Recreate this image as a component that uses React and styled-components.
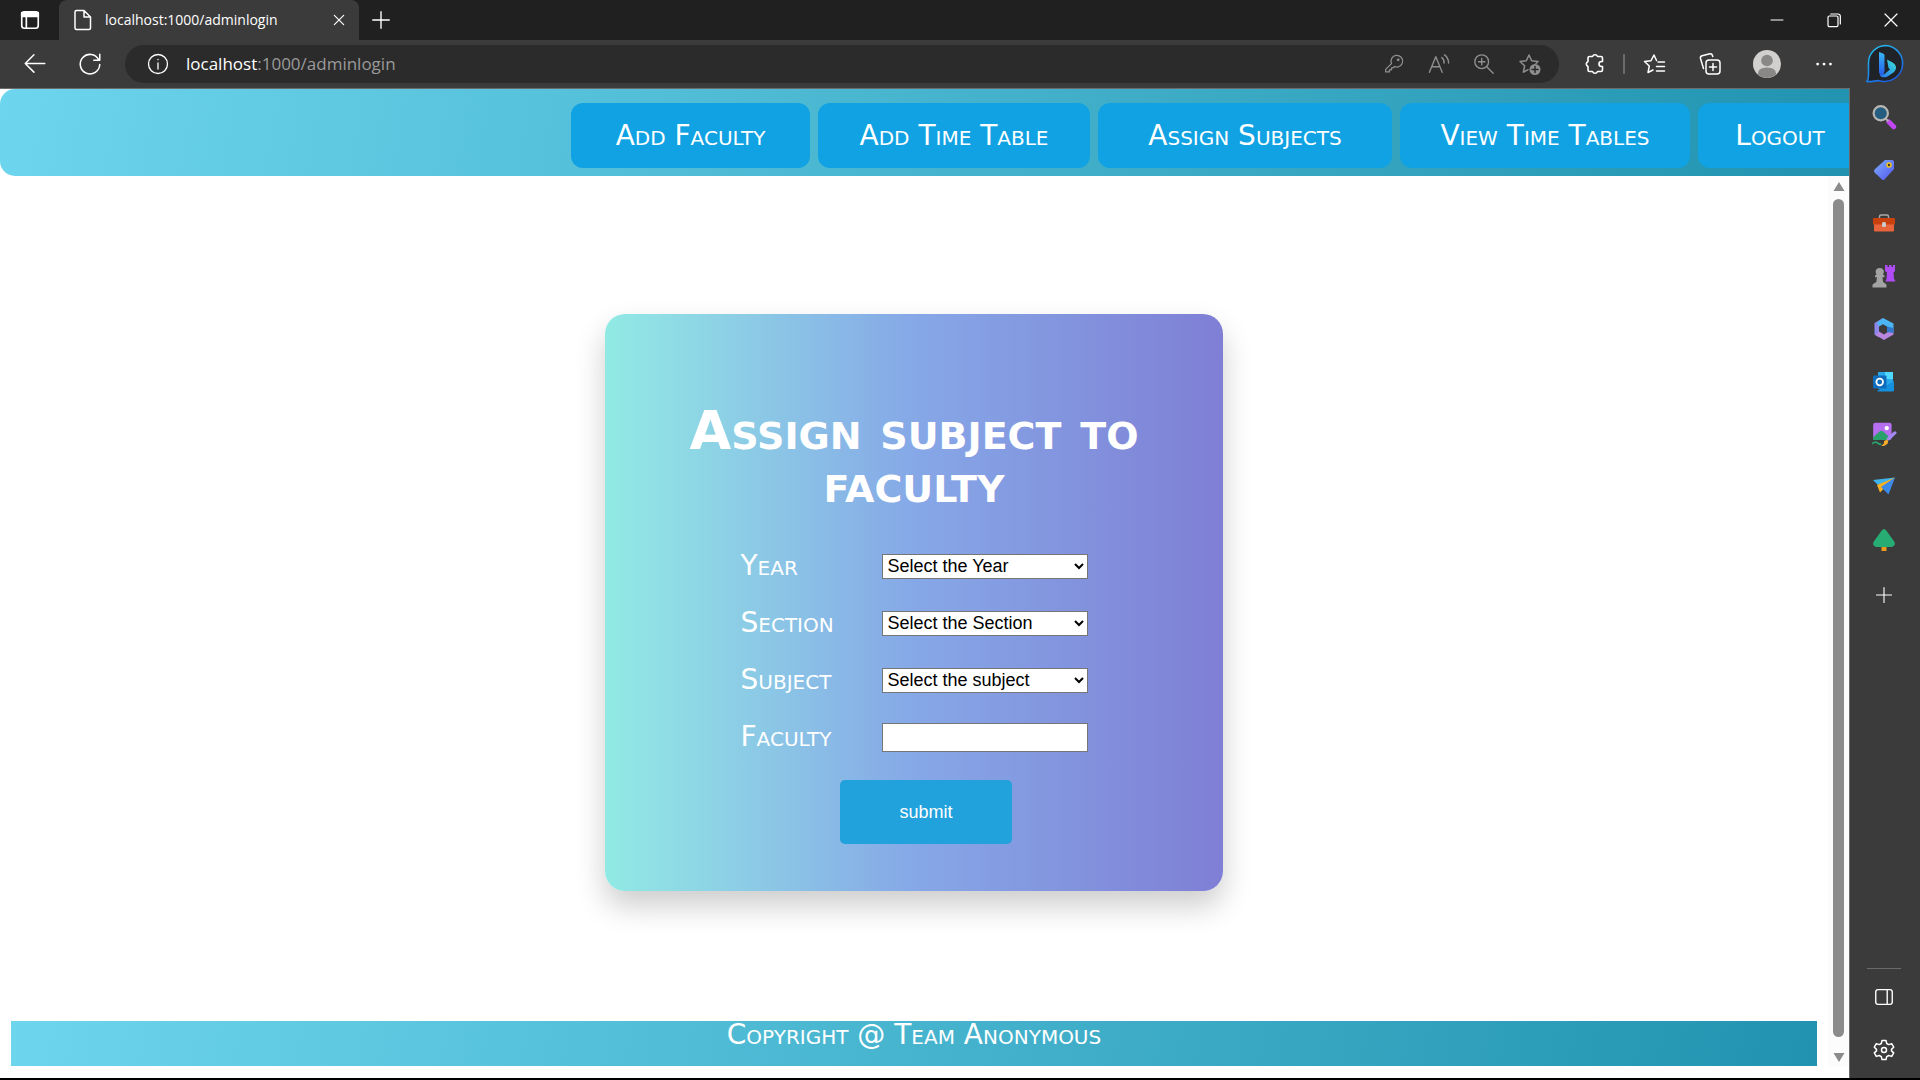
import React from "react";
import styled, { createGlobalStyle } from "styled-components";

const Global = createGlobalStyle`
  * { box-sizing: border-box; }
  html, body, #root { height: 100%; margin: 0; }
  body { background: #000; overflow: hidden; }
  button { border: 0; padding: 0; background: none; color: inherit; font: inherit; }
  svg { display: block; }
`;

const ui = `"Open Sans", "Noto Sans", sans-serif`;
const display = `"DejaVu Sans", sans-serif`;

const Browser = styled.div`
  height: calc(100vh - 2px);
  display: flex;
  flex-direction: column;
  background: #3b3b3b;
  color: #fff;
  font-family: ${ui};
`;
const TabStrip = styled.div`
  flex: none;
  height: 40px;
  display: flex;
  align-items: center;
  background: #202020;
`;
const IconButton = styled.button`
  flex: none;
  width: ${(p) => p.$w}px;
  height: ${(p) => p.$h || 40}px;
  display: flex;
  align-items: center;
  justify-content: center;
`;
const Tab = styled.div`
  width: 300px;
  height: 40px;
  padding: 0 8px 0 12px;
  display: flex;
  align-items: center;
  gap: 10px;
  background: #3b3b3b;
  border-radius: 8px 8px 0 0;
  font-size: 14px;
  line-height: 20px;
`;
const TabTitle = styled.span`
  flex: 1;
`;
const Spacer = styled.div`
  flex: 1;
`;
const Toolbar = styled.div`
  flex: none;
  height: 48px;
  display: flex;
  align-items: center;
  padding-left: 7px;
`;
const AddressBar = styled.div`
  flex: 1;
  height: 38px;
  margin: 0 8px;
  padding: 0 8px 0 12px;
  display: flex;
  align-items: center;
  background: #2b2b2b;
  border-radius: 19px;
`;
const Address = styled.input`
  width: 10px;
  flex: 1;
  padding: 0;
  border: 0;
  outline: 0;
  background: none;
  color: #9a9a9a;
  font: 17px/24px ${ui};
`;
const Host = styled.label`
  padding-left: 8px;
  font-size: 17px;
  line-height: 24px;
`;
const Divider = styled.div`
  flex: none;
  width: ${(p) => (p.$h ? "34px" : "2px")};
  height: ${(p) => (p.$h ? "1px" : "20px")};
  background: #6b6b6b;
`;
const Body = styled.div`
  flex: 1;
  min-height: 0;
  display: flex;
`;
const Page = styled.div`
  flex: 1;
  min-width: 0;
  display: flex;
  flex-direction: column;
  background: #fff;
  border-top: 1px solid #6b6b6b;
  border-right: 1px solid #6b6b6b;
`;
const SideBar = styled.aside`
  flex: none;
  width: 70px;
  padding: 2px 2px 3px 0;
  display: flex;
  flex-direction: column;
  align-items: center;
`;

const Header = styled.header`
  flex: none;
  height: 87px;
  padding: 14px 0 8px;
  display: flex;
  justify-content: flex-end;
  overflow: hidden;
  border-radius: 15px 0 0 15px;
  background: linear-gradient(100deg, #6dd5ed, #2193b0);
`;
const Nav = styled.nav`
  display: flex;
  gap: 8px;
  margin-right: -13px;
`;
const NavLink = styled.a`
  min-width: ${(p) => p.$w}px;
  height: 65px;
  display: flex;
  align-items: center;
  justify-content: center;
  border-radius: 12px;
  background: #10a2e2;
  color: #fff;
  font: 28px/32px ${display};
  font-variant: small-caps;
  text-decoration: none;
  white-space: nowrap;
`;
const Scroller = styled.div`
  flex: 1;
  min-height: 0;
  display: flex;
  padding-bottom: 11px;
`;
const Content = styled.main`
  flex: 1;
  display: flex;
  flex-direction: column;
  justify-content: space-between;
  padding: 138px 11px 1px;
`;
const Track = styled.div`
  width: 21px;
  padding: 6px 0 5px;
  display: flex;
  flex-direction: column;
  align-items: center;
  background: #fcfcfc;
`;
const Thumb = styled.div`
  flex: 1;
  width: 11px;
  margin: 8px 0 16px;
  border-radius: 6px;
  background: #8b8b8b;
`;
const Card = styled.form`
  align-self: center;
  width: 618px;
  min-height: 577px;
  padding: 90px 40px 46px;
  border-radius: 20px;
  background: linear-gradient(90deg, #91eae4, #86a8e7, #7f7fd5);
  box-shadow: 0 15px 30px rgba(0, 0, 0, 0.2);
`;
const Title = styled.h1`
  margin: 0 0 42px;
  font: bold 54px/53px ${display};
  font-variant: small-caps;
  text-align: center;
`;
const Row = styled.div`
  height: 28px;
  margin-bottom: 29px;
  display: flex;
  align-items: center;
  justify-content: center;
`;
const Label = styled.label`
  width: 141px;
  font: 28px/28px ${display};
  font-variant: small-caps;
`;
const Select = styled.select`
  width: 206px;
  height: 25px;
  padding: 0 1px;
  border: 1px solid #767676;
  background: #fff;
  color: #000;
  font: 18px/20px "Liberation Sans", sans-serif;
`;
const Input = styled.input`
  width: 206px;
  height: 29px;
  border: 1px solid #767676;
  background: #fff;
  font: 18px/20px "Liberation Sans", sans-serif;
`;
const Submit = styled.button`
  display: block;
  width: 172px;
  height: 64px;
  margin-left: 195px;
  border-radius: 5px;
  background: #21a2dc;
  color: #fff;
  font: 18px/24px "Liberation Sans", sans-serif;
`;
const Footer = styled.footer`
  height: 45px;
  background: linear-gradient(100deg, #6dd5ed, #2193b0);
  text-align: center;
  font: 28px/28px ${display};
  font-variant: small-caps;
`;

const Line = ({ s = 24, c = "#fff", w = 1.5, children }) => (
  <svg width={s} height={s} viewBox="0 0 24 24" fill="none" stroke={c} strokeWidth={w} strokeLinecap="round" strokeLinejoin="round" aria-hidden="true">
    {children}
  </svg>
);
const Art = ({ s = 24, children }) => (
  <svg width={s} height={s} viewBox="0 0 24 24" aria-hidden="true">{children}</svg>
);

const BingLogo = () => (
  <svg width="40" height="40" viewBox="0 0 40 40" aria-hidden="true">
    <defs>
      <linearGradient id="ring" x1="0" y1="0" x2="0.6" y2="1">
        <stop offset="0" stopColor="#25c7ee" /><stop offset="1" stopColor="#1c5fe0" />
      </linearGradient>
      <linearGradient id="stem" x1="0" y1="0" x2="0" y2="1">
        <stop offset="0" stopColor="#37b8f5" /><stop offset="1" stopColor="#2457e8" />
      </linearGradient>
      <linearGradient id="bowl" x1="0" y1="1" x2="1" y2="0">
        <stop offset="0" stopColor="#2873ee" /><stop offset="1" stopColor="#3be2d8" />
      </linearGradient>
    </defs>
    <path d="M20.500 1.500a18 18 0 1 1-5 35.500c-4-1.500-8 1.500-13.500.5C3 36 3.500 34 3.500 31V19A17.500 17.500 0 0 1 20.500 1.500z" fill="#1f2226" stroke="url(#ring)" strokeWidth="1.600" />
    <path d="M14 8l4 1.500q1.500.6 1.500 2V27l-1.500 5.500c-2.500-.5-4-2.500-4-5z" fill="url(#stem)" />
    <path d="M22 15.500l5.500 3c4.500 2.500 4.500 7 1 10L22.500 32.500c-3 1.500-6.500 1-8-1.500 2 .5 4 0 5-1l5.500-4.500-1.500-1.500z" fill="url(#bowl)" />
  </svg>
);

const sideApps = [
  ["Search", 53, (
    <Art s={26}><path d="M16.500 16.500l4.500 4.500" stroke="#c246f2" strokeWidth="4.500" strokeLinecap="round" /><path d="M13 13l3 3" stroke="#aaa" strokeWidth="2" /><circle cx="9" cy="8.500" r="6.600" fill="#245d80" stroke="#b9b7b4" strokeWidth="2" /></Art>
  )],
  ["Shopping", 53, (
    <Art><defs><linearGradient id="tag" x1="0" y1="0" x2="1" y2="1"><stop stopColor="#7fb0fc" /><stop offset="1" stopColor="#5153ee" /></linearGradient></defs>
      <path d="M13 2h7.500L22 3.500V11L12.500 21.500q-1.500 1-2.500 0l-7.500-7q-1-1.500 0-3z" fill="url(#tag)" /><circle cx="17" cy="7" r="2" fill="#3d3a20" stroke="#f5c518" strokeWidth="1.500" /></Art>
  )],
  ["Tools", 53, (
    <Art><path d="M7.500 8V5.500q0-1.500 1.500-1.500h6q1.500 0 1.500 1.500V8" fill="none" stroke="#aaa" strokeWidth="1.400" /><rect x="2" y="12" width="20" height="8.500" rx="1" fill="#e8653c" /><path d="M1 8q0-1 1-1h20q1 0 1 1v5.500H1z" fill="#c9410f" /><rect x="10" y="11" width="4" height="5" rx="1.500" fill="#ccc" /></Art>
  )],
  ["Games", 53, (
    <Art><path d="M13 1h2.500v2H17V1h2.500v2H21V1h2v6l-1.500 1.500.5 6 1.500 3h-10l1-3 .5-6L13 7z" fill="#b04cf5" /><path d="M8 4a4 4 0 0 1 3 6.600l1.500 1v1.600h-2l.6 4.800 3.400 2.500v3H.5v-3L4.300 18l.7-4.800H3v-1.600l1.500-1A4 4 0 0 1 8 4z" fill="#a3a3a3" /></Art>
  )],
  ["Microsoft 365", 53, (
    <Art><path d="M11 1L2.500 6v11.500l4.500 3V9.500z" fill="#8f86ea" /><path d="M11 1l10.500 5.500v7L15 15V9.500l-4-2.300-4 2.300-2-4z" fill="#4cb5f3" /><path d="M21.500 13v4.500L12 23l-8.500-5L7 14.500l5 3 3-2z" fill="#b786df" /><path d="M15 9.500l6.500 1.500v5L15 15z" fill="#3279cc" /></Art>
  )],
  ["Outlook", 53, (
    <Art><path d="M6 2h15v17H6z" fill="#28a8ea" /><path d="M13 2h8v7h-8z" fill="#50d9ff" /><path d="M5 21l17-10v9q0 1.500-1.500 1.500H6z" fill="#1490df" /><rect x="1" y="5.500" width="13.500" height="13" rx="1" fill="#0f6cbd" /><circle cx="7.700" cy="12" r="3.300" fill="none" stroke="#fff" strokeWidth="1.800" /></Art>
  )],
  ["Image Creator", 51, (
    <Art s={26}><rect x="2" y="1.500" width="17" height="16" rx="2" fill="#b76ff2" /><path d="M2 15l6-5.500q1.500-1 3 0l5 4.500v3.500H2z" fill="#2aa06c" /><circle cx="14.500" cy="6.500" r="2" fill="#fff" /><path d="M1 21q3-2.500 4.500-1t4 1.500" fill="none" stroke="#27a36d" strokeWidth="1.600" /><path d="M16 16.500l6-5.500" stroke="#a58af6" strokeWidth="3" strokeLinecap="round" /><path d="M9.500 22.500q3-1 2.500-4l3-1.500q2 3-1 5t-4.500.5z" fill="#f4ac2b" /></Art>
  )],
  ["Drop", 54, (
    <Art><path d="M1 6l22-2.500L8 13z" fill="#3fb4ec" /><path d="M5 11L23 3.500 8 18.500z" fill="#f6b021" /><path d="M9 13l14-9.500-6.500 17z" fill="#3c8ae8" /></Art>
  )],
  ["Games tree", 53, (
    <Art><rect x="9.500" y="18" width="5" height="5" fill="#ed9a1c" /><path d="M12 1q1.500 0 3 2.500l7.500 10.500q1.500 4-3 5h-15q-4.500-1-3-5L9 3.500Q10.500 1 12 1z" fill="#27ad73" /></Art>
  )],
];

const navItems = [
  ["Add Faculty", 239],
  ["Add Time Table", 272],
  ["Assign Subjects", 294],
  ["View Time Tables", 290],
  ["Logout", 164],
];
const selects = [
  ["Year", "Select the Year"],
  ["Section", "Select the Section"],
  ["Subject", "Select the subject"],
];

export default function App() {
  return (
    <>
      <Global />
      <Browser>
        <TabStrip>
          <IconButton $w={59} aria-label="Tab actions">
            <Line w={1.800} s={22}><rect x="3" y="3" width="18" height="18" rx="3" /><path d="M3 4h18v4H3zM8 8v13" /><path d="M4 5.500h16" strokeWidth="4" /></Line>
          </IconButton>
          <Tab>
            <Line s={24}><path d="M5.500 2.500H13l6.500 6.500v11q0 1.500-1.500 1.500H5.500Q4 21.500 4 20V4q0-1.500 1.500-1.500M13 2.500v6.500h6.500" /></Line>
            <TabTitle>localhost:1000/adminlogin</TabTitle>
            <IconButton $w={24} aria-label="Close tab"><Line s={14} w={2}><path d="M4 4l16 16M20 4L4 20" /></Line></IconButton>
          </Tab>
          <IconButton $w={44} aria-label="New tab"><Line s={22}><path d="M12 3v18M3 12h18" /></Line></IconButton>
          <Spacer />
          <IconButton $w={57} aria-label="Minimize"><Line s={16}><path d="M3 12h18" /></Line></IconButton>
          <IconButton $w={57} aria-label="Restore"><Line s={16} w={1.800}><rect x="3" y="6" width="15" height="16" rx="2" /><path d="M7 3h11q3.500 0 3.500 3.500V18" /></Line></IconButton>
          <IconButton $w={58} aria-label="Close"><Line s={16} w={1.800}><path d="M3 3l18 18M21 3L3 21" /></Line></IconButton>
        </TabStrip>
        <Toolbar>
          <IconButton $w={55} aria-label="Back"><Line s={26} w={1.400}><path d="M21 11.500H3M11 3.500l-8 8 8 8" /></Line></IconButton>
          <IconButton $w={55} aria-label="Refresh"><Line s={26} w={1.400}><path d="M20 8a9 9 0 1 0 1 4.500M21 3v5.500h-5.500" /></Line></IconButton>
          <AddressBar>
            <IconButton $w={41} $h={38} aria-label="Site information"><Line s={24} w={1.300}><circle cx="12" cy="12" r="9.500" /><path d="M12 11v6M12 7.500v.2" /></Line></IconButton>
            <Host htmlFor="address">localhost</Host>
            <Address id="address" defaultValue=":1000/adminlogin" />
            <IconButton $w={45} aria-label="Saved passwords"><Line s={20} c="#8f8f8f"><path d="M9 11.500A7 7 0 1 1 12.500 15L11 16.500H9V19H6.500v2.500H2V18.500z" /><circle cx="17" cy="7" r="1" /></Line></IconButton>
            <IconButton $w={45} aria-label="Read aloud"><Line s={22} c="#8f8f8f"><path d="M1.500 21L8.500 4l7 17M4 15h9M15 5q3 2.500 2.500 6M18 2q4.500 3.500 4.500 9" /></Line></IconButton>
            <IconButton $w={45} aria-label="Zoom"><Line s={22} c="#8f8f8f"><circle cx="9.500" cy="9.500" r="7.500" /><path d="M15 15l7 7M9.500 6v7M6 9.500h7" /></Line></IconButton>
            <IconButton $w={45} aria-label="Add to favorites"><Line s={24} c="#8f8f8f"><path d="M21 9.500l-6.300-.8L12 3 9.300 8.700 3 9.500l4.600 4.300L6.400 20.200l4.600-2.500M21 9.500l-2 2" /><circle cx="18" cy="17.500" r="5.500" fill="#8f8f8f" stroke="none" /><path d="M18 14.500v6M15 17.500h6" stroke="#2b2b2b" /></Line></IconButton>
          </AddressBar>
          <IconButton $w={56} aria-label="Extensions"><Line s={24} w={1.600}><path d="M6.500 4.500h3a2.700 2.700 0 0 1 5 0H18q1.500 0 1.500 1.500v3.500h-1a2.500 2.500 0 0 0 0 5h1V18q0 1.500-1.500 1.500h-3.500a2.700 2.700 0 0 1-5 0h-3Q5 19.500 5 18v-3.500a2.700 2.700 0 0 1 0-5V6q0-1.500 1.500-1.500z" /></Line></IconButton>
          <Divider />
          <IconButton $w={58} aria-label="Favorites"><Line s={24}><path d="M14.500 8.500L12 3 9 8.700 2.500 9.500l4.800 4.500-1.300 6.500L11 18M16 10h6.500M14.500 14.500h8M14.500 19h8" /></Line></IconButton>
          <IconButton $w={54} aria-label="Collections"><Line s={24}><rect x="8" y="8" width="14" height="14" rx="3" /><path d="M15 11.500v7M11.500 15h7M5.500 16.500L2.500 6.500q-.5-2 1.500-2.700l8-2q2-.4 2.800 2.700" /></Line></IconButton>
          <IconButton $w={60} aria-label="Profile"><Art s={28}><circle cx="12" cy="12" r="12" fill="#d2d0ce" /><circle cx="12" cy="9" r="5" fill="#8a8886" /><path d="M4 21q0-6 8-6t8 6q-8 6-16 0z" fill="#8a8886" /></Art></IconButton>
          <IconButton $w={53} aria-label="Settings and more"><Line s={22} w={3}><path d="M5 12h.1M12 12h.1M19 12h.1" /></Line></IconButton>
          <IconButton $w={70} aria-label="Bing chat"><BingLogo /></IconButton>
        </Toolbar>
        <Body>
          <Page>
            <Header>
              <Nav>
                {navItems.map(([t, w]) => <NavLink key={t} href="#" $w={w}>{t}</NavLink>)}
              </Nav>
            </Header>
            <Scroller>
              <Content>
                <Card onSubmit={(e) => e.preventDefault()}>
                  <Title>Assign subject to faculty</Title>
                  {selects.map(([label, option]) => (
                    <Row key={label}>
                      <Label htmlFor={label}>{label}</Label>
                      <Select id={label}><option>{option}</option></Select>
                    </Row>
                  ))}
                  <Row>
                    <Label htmlFor="Faculty">Faculty</Label>
                    <Input id="Faculty" type="text" />
                  </Row>
                  <Submit type="submit">submit</Submit>
                </Card>
                <Footer>Copyright @ Team Anonymous</Footer>
              </Content>
              <Track>
                <svg width="12" height="9" viewBox="0 0 12 9" aria-hidden="true"><path d="M6 0l5.500 9H.5z" fill="#8b8b8b" /></svg>
                <Thumb />
                <svg width="12" height="9" viewBox="0 0 12 9" aria-hidden="true"><path d="M.5 0h11L6 9z" fill="#8b8b8b" /></svg>
              </Track>
            </Scroller>
          </Page>
          <SideBar>
            {sideApps.map(([name, h, icon]) => (
              <IconButton key={name} $w={48} $h={h} aria-label={name}>{icon}</IconButton>
            ))}
            <IconButton $w={48} $h={58} aria-label="Add app"><Line s={18}><path d="M12 2v20M2 12h20" /></Line></IconButton>
            <Spacer />
            <Divider $h />
            <IconButton $w={48} $h={56} aria-label="Hide sidebar"><Line s={22}><rect x="3" y="4" width="18" height="16" rx="2.500" /><path d="M15.500 4v16" /></Line></IconButton>
            <IconButton $w={48} $h={50} aria-label="Settings"><Line s={24}><path d="M10 2.500h4l.7 3 2 1.100 3-.9 2 3.500-2.200 2.200v1.500l2.200 2-2 3.500-3-.9-2 1.100-.7 3h-4l-.7-3-2-1.100-3 .9-2-3.500 2.200-2v-1.500L2.300 9.200l2-3.500 3 .9 2-1.100z" /><circle cx="12" cy="12" r="2.500" /></Line></IconButton>
          </SideBar>
        </Body>
      </Browser>
    </>
  );
}
